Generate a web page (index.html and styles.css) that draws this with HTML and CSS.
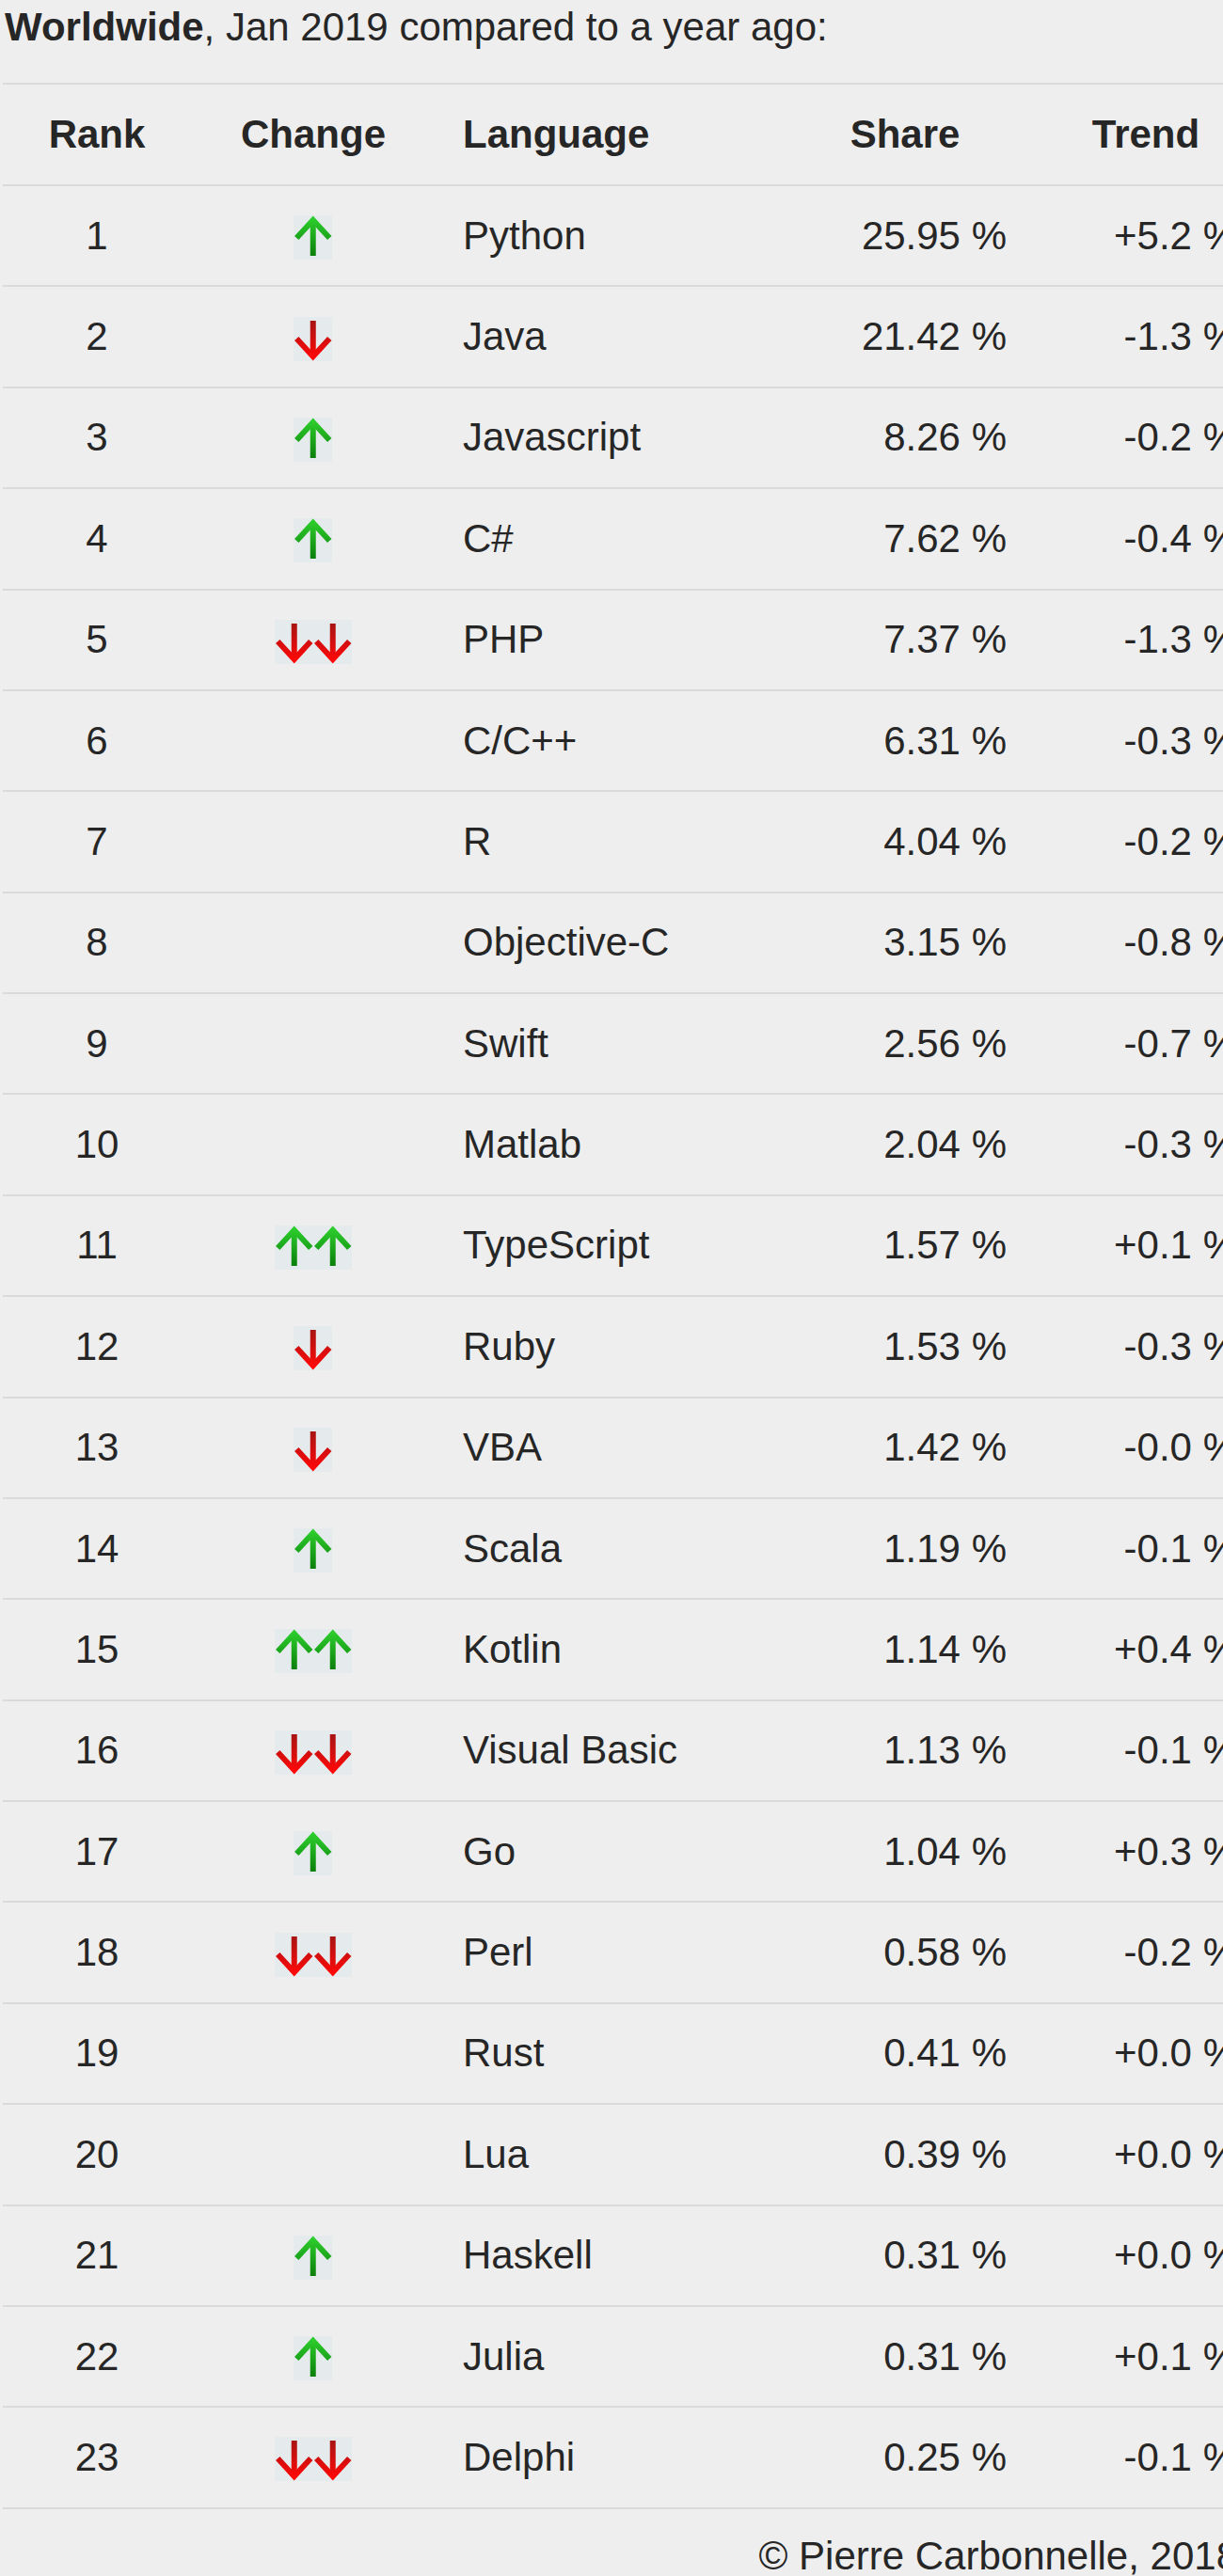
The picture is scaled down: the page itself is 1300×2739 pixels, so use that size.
FILE: index.html
```html
<!DOCTYPE html>
<html lang="en">
<head>
<meta charset="utf-8">
<title>PYPL Worldwide</title>
<link rel="stylesheet" href="styles.css">
</head>
<body>
<svg class="defs" aria-hidden="true">
  <defs>
    <linearGradient id="gUp" gradientUnits="userSpaceOnUse" x1="0" y1="4" x2="0" y2="44">
      <stop offset="0" stop-color="#2ccc2c"/>
      <stop offset="1" stop-color="#0a7d0a"/>
    </linearGradient>
    <linearGradient id="gDown" gradientUnits="userSpaceOnUse" x1="0" y1="4" x2="0" y2="44">
      <stop offset="0" stop-color="#a81414"/>
      <stop offset="1" stop-color="#ff0808"/>
    </linearGradient>
    <symbol id="up" viewBox="0 0 41 47">
      <rect width="41" height="47" fill="#e5eaec"/>
      <path d="M20.5 6 V43" stroke="url(#gUp)" stroke-width="6" fill="none"/>
      <path d="M3 24 L20.5 5 L38 24" stroke="url(#gUp)" stroke-width="6" fill="none" stroke-linejoin="miter"/>
    </symbol>
    <symbol id="down" viewBox="0 0 41 47">
      <rect width="41" height="47" fill="#e5eaec"/>
      <path d="M20.5 4 V41" stroke="url(#gDown)" stroke-width="6" fill="none"/>
      <path d="M3 23 L20.5 42 L38 23" stroke="url(#gDown)" stroke-width="6" fill="none" stroke-linejoin="miter"/>
    </symbol>
  </defs>
</svg>

<div class="page">
  <div class="title"><b>Worldwide</b>, Jan 2019 compared to a year ago:</div>

  <div class="table">
    <div class="row head">
      <div class="c rank">Rank</div>
      <div class="c change">Change</div>
      <div class="c lang">Language</div>
      <div class="c share">Share</div>
      <div class="c trend">Trend</div>
    </div>

    <div class="row"><div class="c rank">1</div><div class="c change"><svg class="arrow"><use href="#up"/></svg></div><div class="c lang">Python</div><div class="c share">25.95 %</div><div class="c trend">+5.2 %</div></div>
    <div class="row"><div class="c rank">2</div><div class="c change"><svg class="arrow"><use href="#down"/></svg></div><div class="c lang">Java</div><div class="c share">21.42 %</div><div class="c trend">-1.3 %</div></div>
    <div class="row"><div class="c rank">3</div><div class="c change"><svg class="arrow"><use href="#up"/></svg></div><div class="c lang">Javascript</div><div class="c share">8.26 %</div><div class="c trend">-0.2 %</div></div>
    <div class="row"><div class="c rank">4</div><div class="c change"><svg class="arrow"><use href="#up"/></svg></div><div class="c lang">C#</div><div class="c share">7.62 %</div><div class="c trend">-0.4 %</div></div>
    <div class="row"><div class="c rank">5</div><div class="c change"><svg class="arrow"><use href="#down"/></svg><svg class="arrow"><use href="#down"/></svg></div><div class="c lang">PHP</div><div class="c share">7.37 %</div><div class="c trend">-1.3 %</div></div>
    <div class="row"><div class="c rank">6</div><div class="c change"></div><div class="c lang">C/C++</div><div class="c share">6.31 %</div><div class="c trend">-0.3 %</div></div>
    <div class="row"><div class="c rank">7</div><div class="c change"></div><div class="c lang">R</div><div class="c share">4.04 %</div><div class="c trend">-0.2 %</div></div>
    <div class="row"><div class="c rank">8</div><div class="c change"></div><div class="c lang">Objective-C</div><div class="c share">3.15 %</div><div class="c trend">-0.8 %</div></div>
    <div class="row"><div class="c rank">9</div><div class="c change"></div><div class="c lang">Swift</div><div class="c share">2.56 %</div><div class="c trend">-0.7 %</div></div>
    <div class="row"><div class="c rank">10</div><div class="c change"></div><div class="c lang">Matlab</div><div class="c share">2.04 %</div><div class="c trend">-0.3 %</div></div>
    <div class="row"><div class="c rank">11</div><div class="c change"><svg class="arrow"><use href="#up"/></svg><svg class="arrow"><use href="#up"/></svg></div><div class="c lang">TypeScript</div><div class="c share">1.57 %</div><div class="c trend">+0.1 %</div></div>
    <div class="row"><div class="c rank">12</div><div class="c change"><svg class="arrow"><use href="#down"/></svg></div><div class="c lang">Ruby</div><div class="c share">1.53 %</div><div class="c trend">-0.3 %</div></div>
    <div class="row"><div class="c rank">13</div><div class="c change"><svg class="arrow"><use href="#down"/></svg></div><div class="c lang">VBA</div><div class="c share">1.42 %</div><div class="c trend">-0.0 %</div></div>
    <div class="row"><div class="c rank">14</div><div class="c change"><svg class="arrow"><use href="#up"/></svg></div><div class="c lang">Scala</div><div class="c share">1.19 %</div><div class="c trend">-0.1 %</div></div>
    <div class="row"><div class="c rank">15</div><div class="c change"><svg class="arrow"><use href="#up"/></svg><svg class="arrow"><use href="#up"/></svg></div><div class="c lang">Kotlin</div><div class="c share">1.14 %</div><div class="c trend">+0.4 %</div></div>
    <div class="row"><div class="c rank">16</div><div class="c change"><svg class="arrow"><use href="#down"/></svg><svg class="arrow"><use href="#down"/></svg></div><div class="c lang">Visual Basic</div><div class="c share">1.13 %</div><div class="c trend">-0.1 %</div></div>
    <div class="row"><div class="c rank">17</div><div class="c change"><svg class="arrow"><use href="#up"/></svg></div><div class="c lang">Go</div><div class="c share">1.04 %</div><div class="c trend">+0.3 %</div></div>
    <div class="row"><div class="c rank">18</div><div class="c change"><svg class="arrow"><use href="#down"/></svg><svg class="arrow"><use href="#down"/></svg></div><div class="c lang">Perl</div><div class="c share">0.58 %</div><div class="c trend">-0.2 %</div></div>
    <div class="row"><div class="c rank">19</div><div class="c change"></div><div class="c lang">Rust</div><div class="c share">0.41 %</div><div class="c trend">+0.0 %</div></div>
    <div class="row"><div class="c rank">20</div><div class="c change"></div><div class="c lang">Lua</div><div class="c share">0.39 %</div><div class="c trend">+0.0 %</div></div>
    <div class="row"><div class="c rank">21</div><div class="c change"><svg class="arrow"><use href="#up"/></svg></div><div class="c lang">Haskell</div><div class="c share">0.31 %</div><div class="c trend">+0.0 %</div></div>
    <div class="row"><div class="c rank">22</div><div class="c change"><svg class="arrow"><use href="#up"/></svg></div><div class="c lang">Julia</div><div class="c share">0.31 %</div><div class="c trend">+0.1 %</div></div>
    <div class="row"><div class="c rank">23</div><div class="c change"><svg class="arrow"><use href="#down"/></svg><svg class="arrow"><use href="#down"/></svg></div><div class="c lang">Delphi</div><div class="c share">0.25 %</div><div class="c trend">-0.1 %</div></div>
  </div>

  <div class="footer">© Pierre Carbonnelle, 2018</div>
</div>
</body>
</html>
```

FILE: styles.css
```css
html, body {
  margin: 0;
  padding: 0;
  overflow: hidden;
  background: #eeeeee;
}

body {
  font-family: "Liberation Sans", Arial, Helvetica, sans-serif;
  font-size: 42px;
  color: #262626;
}

.defs {
  display: block;
  width: 0;
  height: 0;
  overflow: hidden;
}

.page {
  width: 1300px;
  overflow: hidden;
}

.title {
  margin: 0 0 30px 5px;
  line-height: 58px;
  height: 58px;
  white-space: nowrap;
}

.title b {
  font-weight: bold;
}

.table {
  margin-left: 3px;
  width: 1363px;
  border-bottom: 2px solid #dadada;
}

.row {
  display: grid;
  grid-template-columns: 200px 260px 391px 216px 296px;
  align-items: center;
  box-sizing: border-box;
  height: 107.375px;
  border-top: 2px solid #dadada;
  white-space: nowrap;
}

.row.head {
  height: 108px;
  font-weight: bold;
}

.c {
  line-height: 48px;
}

.rank,
.change {
  text-align: center;
}

.change {
  display: flex;
  justify-content: center;
  align-items: center;
  height: 47px;
  margin-top: 4px;
}

.head .change {
  display: block;
  height: auto;
  margin-top: 0;
}

.lang {
  padding-left: 29px;
}

.share {
  text-align: right;
}

.trend {
  text-align: right;
  padding-right: 50px;
}

.head .share,
.head .trend {
  text-align: center;
  padding-right: 0;
}

.arrow {
  display: block;
  width: 41.5px;
  height: 47px;
}

.footer {
  width: 1363px;
  margin-left: 3px;
  box-sizing: border-box;
  padding-right: 50px;
  margin-top: 26px;
  text-align: right;
  line-height: 48px;
  white-space: nowrap;
}
```
